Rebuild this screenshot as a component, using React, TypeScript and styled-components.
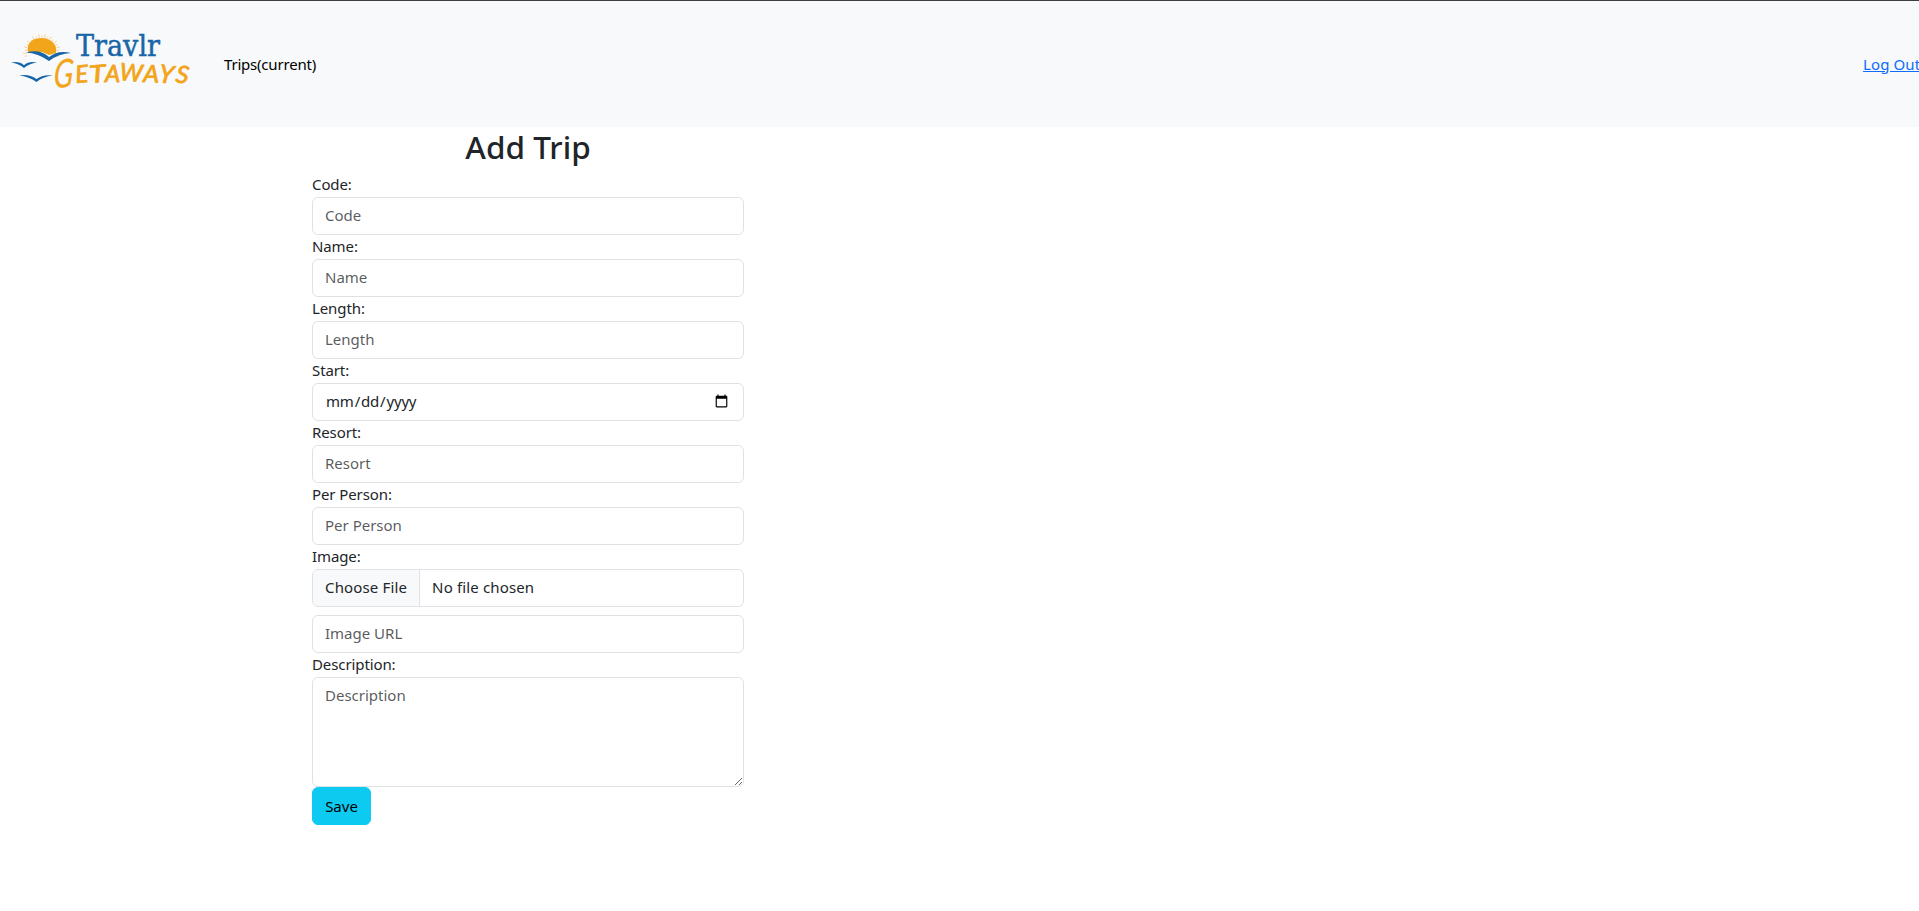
import React from "react";
import styled, { createGlobalStyle, css } from "styled-components";

const GlobalStyle = createGlobalStyle`
  *, *::before, *::after { box-sizing: border-box; }
  body {
    margin: 0;
    background: #fff;
    color: #212529;
    font-family: "Segoe UI", "Noto Sans", sans-serif;
    font-size: 15px;
    line-height: 24px;
    overflow: hidden;
  }
`;

const Navbar = styled.nav`
  display: flex;
  align-items: center;
  height: 127px;
  padding: 0 0 1px 11px;
  background: #f8f9fa;
  border-top: 1px solid #3e3e42;
`;

const Brand = styled.a`
  display: flex;
  width: 180px;
  height: 68px;
  margin-bottom: 5px;
`;

const NavItem = styled.a`
  margin-left: 33px;
  color: #000;
  letter-spacing: -0.2px;
`;

const LogOut = styled.a`
  width: 56px;
  margin-left: auto;
  color: #0d6efd;
  letter-spacing: 0.1px;
  white-space: nowrap;
  text-decoration: underline;
`;

const Container = styled.main`
  width: 1319px;
  margin: 0 auto;
  padding: 0 12px;
`;

const TripForm = styled.form`
  display: flex;
  flex-direction: column;
  width: 432px;
`;

const Title = styled.h2`
  height: 38px;
  margin: 0 0 8px;
  padding-top: 1px;
  font-size: 31.500px;
  font-weight: 500;
  line-height: 38px;
  text-align: center;
`;

const Label = styled.label`
  height: 24px;
  line-height: 23px;
  letter-spacing: -0.1px;
`;

const control = css`
  display: block;
  width: 100%;
  margin: 0;
  padding: 5px 12px 7px;
  border: 1px solid #dee2e6;
  border-radius: 6px;
  background: #fff;
  color: #212529;
  font: inherit;
  &::placeholder { color: rgba(33, 37, 41, 0.75); opacity: 1; }
`;

const Input = styled.input<{ $spaced?: boolean }>`
  ${control}
  height: 38px;
  margin-top: ${(p) => (p.$spaced ? 8 : 0)}px;
  overflow: hidden;

  &[type="date"] { letter-spacing: -0.2px; }
  &[type="file"] { letter-spacing: 0.15px; }
  &::-webkit-datetime-edit { padding: 0; }
  &::file-selector-button {
    margin: -5px 12px -7px -12px;
    padding: 5px 12px 7px;
    border: 0 solid #dee2e6;
    border-right-width: 1px;
    border-radius: 0;
    background: #f8f9fa;
    color: #212529;
    font: inherit;
    letter-spacing: inherit;
    height: 36px;
  }
`;

const TextArea = styled.textarea`
  ${control}
  height: 110px;
  resize: vertical;
`;

const SaveButton = styled.button`
  align-self: flex-start;
  width: 59px;
  height: 38px;
  padding: 0 0 1px;
  border: 1px solid #0dcaf0;
  border-radius: 6px;
  background: #0dcaf0;
  color: #000;
  font: inherit;
`;

const rays = Array.from({ length: 21 }, (_, i) => {
  const a = Math.PI * (0.94 + (i * 1.12) / 20);
  const r = i % 2 ? 19 : 17.5;
  return `M${31 + 15.5 * Math.cos(a)} ${26 + 15.5 * Math.sin(a)}L${31 + r * Math.cos(a)} ${26 + r * Math.sin(a)}`;
}).join("");

// Letter, x, baseline, size, rotation, horizontal stretch
const letters: [string, number, number, number, number, number][] = [
  ["E", 65, 56, 24, -5, 1],
  ["T", 79, 56, 24, -5, 1.25],
  ["A", 94, 55, 24, 0, 1],
  ["W", 108, 53, 24, 5, 1],
  ["A", 132, 55, 24, 2, 1.05],
  ["Y", 147, 55, 25, 8, 1],
  ["S", 164, 55, 24, 8, 1.05],
];

function Logo() {
  return (
    <svg width="180" height="68" viewBox="0 0 180 68">
      <path d={rays} stroke="#f4cd89" strokeWidth="0.9" fill="none" />
      <path d="M17 26C15 15 22 11 31 11S47 18 45 26L38 28L31 25Z" fill="#f2a51b" />
      <path d="M15 25.5Q29 21.500 38 30Q47 22.500 60 26Q48 26.500 38 34Q27 26 15 25.500Z" fill="#1865a8" />
      <path d="M0 35.500Q8 33.500 13 38.200Q18 33.500 26 35.500Q18 36.500 13 41Q8 36.500 0 35.500Z" fill="#1865a8" />
      <path d="M8 48.500Q18 46.500 25.500 52Q32 47 42 48.500Q32 49.500 25.500 55Q18 49.500 8 48.500Z" fill="#1865a8" />
      <text x="65" y="29" fill="#1865a8" stroke="#1865a8" strokeWidth="0.5" fontFamily="'DejaVu Serif', serif" fontSize="29" textLength="84" lengthAdjust="spacingAndGlyphs">Travlr</text>
      <g fill="#f2a51b" stroke="#f2a51b" strokeLinejoin="round" fontFamily="Lato, sans-serif" fontStyle="italic" fontWeight="400">
        <text transform="translate(42 61) rotate(-4) skewX(-8) scale(.74 1)" fontSize="39" strokeWidth="0.3">G</text>
        {letters.map(([c, x, y, size, angle, stretch], i) => (
          <text key={i} transform={`translate(${x} ${y}) rotate(${angle}) scale(${stretch} 1)`} fontSize={size} strokeWidth="0.8">{c}</text>
        ))}
      </g>
    </svg>
  );
}

export default function App() {
  return (
    <>
      <GlobalStyle />
      <Navbar>
        <Brand><Logo /></Brand>
        <NavItem>Trips(current)</NavItem>
        <LogOut>Log Out</LogOut>
      </Navbar>
      <Container>
        <TripForm>
          <Title>Add Trip</Title>
          <Label>Code:</Label>
          <Input type="text" placeholder="Code" />
          <Label>Name:</Label>
          <Input type="text" placeholder="Name" />
          <Label>Length:</Label>
          <Input type="text" placeholder="Length" />
          <Label>Start:</Label>
          <Input type="date" />
          <Label>Resort:</Label>
          <Input type="text" placeholder="Resort" />
          <Label>Per Person:</Label>
          <Input type="text" placeholder="Per Person" />
          <Label>Image:</Label>
          <Input type="file" />
          <Input type="text" placeholder="Image URL" $spaced />
          <Label>Description:</Label>
          <TextArea placeholder="Description" />
          <SaveButton type="button">Save</SaveButton>
        </TripForm>
      </Container>
    </>
  );
}
